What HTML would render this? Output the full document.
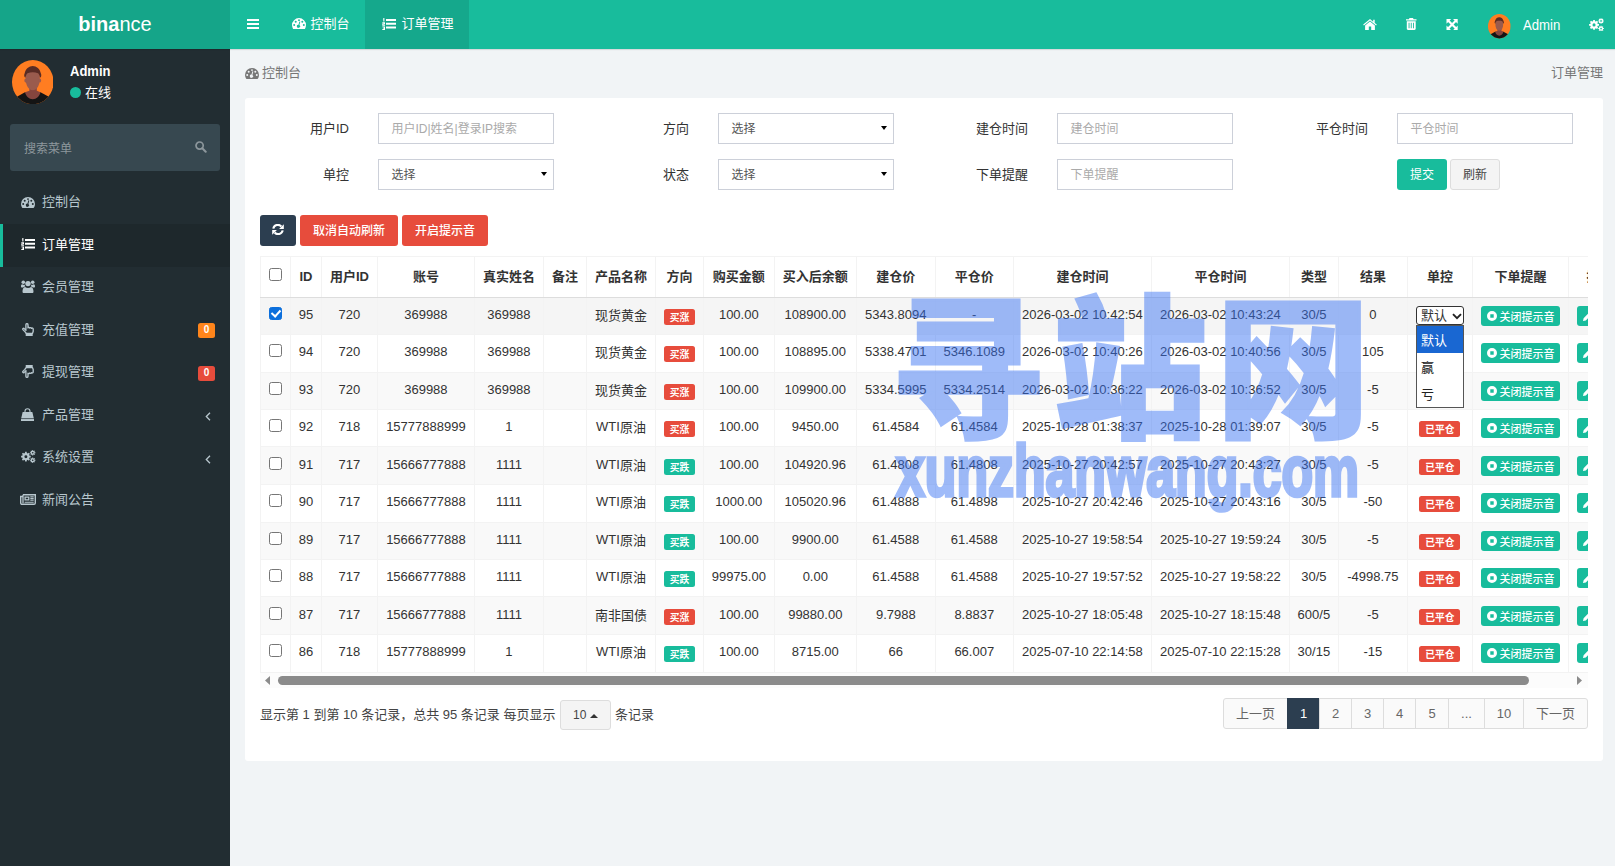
<!DOCTYPE html>
<html lang="zh-CN">
<head>
<meta charset="utf-8">
<title>binance</title>
<style>
*{box-sizing:border-box;margin:0;padding:0}
html,body{width:1615px;height:866px;overflow:hidden}
body{font-family:"Liberation Sans","Noto Sans CJK SC",sans-serif;font-size:13px;color:#444;background:#f1f4f6;position:relative}
svg{display:block}
i{font-style:normal}
/* header */
#hdr{position:absolute;left:0;top:0;width:1615px;height:49px;background:#18bc9c;box-shadow:0 1px 1px rgba(0,0,0,.10);z-index:5}
#logo{position:absolute;left:0;top:0;width:230px;height:49px;background:#15a589;color:#fff;font-size:20px;line-height:49.500px;text-align:center}
#logo b{font-weight:700}
.tab{position:absolute;top:0;height:49px;color:#fff;font-size:13px;line-height:48px;white-space:nowrap}
.tab svg,.hi svg{position:absolute}
.tab span{position:absolute;top:0}
.tab.act{background:rgba(0,0,0,.1)}
.hi{position:absolute;top:0;height:48px}
#hname{position:absolute;left:1522.500px;top:0;line-height:51.2px;font-size:13.800px;color:#fff;transform-origin:0 50%;transform:scaleX(.955)}
/* sidebar */
#side{position:absolute;left:0;top:48px;width:230px;height:818px;background:#222d32}
#uname{position:absolute;left:70px;top:15px;color:#fff;font-weight:700;font-size:14px;line-height:16px;transform-origin:0 50%;transform:scaleX(.93)}
#ustat{position:absolute;left:70px;top:36px;color:#fff;font-size:13px;line-height:18px}
#ustat i{position:absolute;left:-.2px;top:2.600px;width:11.600px;height:11.600px;border-radius:50%;background:#18bc9c}
#ustat span{margin-left:15px}
#srch{position:absolute;left:10px;top:76px;width:210px;height:47px;background:#374850;border-radius:3px;color:#8d979c;font-size:12px;line-height:50px;padding-left:14px}
#srch svg{position:absolute;left:185px;top:17px}
.mi{position:absolute;left:0;width:230px;height:42.57px;color:#b8c7ce;font-size:13px;line-height:40.600px;padding-left:42px}
.mi svg{position:absolute}
.mi.act{background:#1e282c;color:#fff;border-left:3px solid #18bc9c;padding-left:39px}
.bdg{position:absolute;left:198px;top:14px;height:15px;width:17px;border-radius:2.5px;color:#fff;font-size:10px;font-weight:700;line-height:14.500px;text-align:center}
/* content */
#bc{position:absolute;left:262px;top:64px;font-size:13px;line-height:18px;color:#777}
#bc svg{position:absolute;left:-17px;top:3.500px}
#bcr{position:absolute;right:12px;top:64px;font-size:13px;line-height:18px;color:#777}
#panel{position:absolute;left:245px;top:98px;width:1358px;height:663px;background:#fff;border-radius:3px}
.lbl{position:absolute;margin-left:1px;font-size:13px;line-height:32px;color:#333;text-align:right;width:120px}
.inp{position:absolute;width:176px;height:31px;border:1px solid #ccd0d9;background:#fff;font-size:12px;line-height:30px;padding-left:12.500px;color:#aaa}
.inp.sel{color:#555}
.inp.sel:after{content:"";position:absolute;right:6.500px;top:12px;border:3.500px solid transparent;border-top:4.500px solid #000;border-bottom:0}
.btn{position:absolute;height:31px;border-radius:3px;font-size:12px;line-height:32px;text-align:center;color:#fff;white-space:nowrap}
.btn svg{position:absolute}
/* table */
#clip{position:absolute;left:260px;top:256px;width:1328px;height:417px;overflow:hidden}
#tw{position:absolute;left:0;top:0;width:1400px;height:417px;font-size:13px;color:#333}
.rb{position:absolute;left:0;width:1400px;height:37.5px}
.rb.odd{background:#f9f9f9}
.rb.sel{background:#f5f5f5}
.hl{position:absolute;left:0;width:1400px;height:1px;background:#f3f3f3}
.hl2{position:absolute;left:0;width:1400px;height:1px;background:#ddd;z-index:1}
.vl{position:absolute;top:0;width:1px;height:417px;background:#f3f3f3}
.th{position:absolute;top:1px;height:39px;line-height:40px;font-weight:700;text-align:center;white-space:nowrap;color:#333}
.tr{position:absolute;left:0;width:1400px;height:37.5px}
.td{position:absolute;top:0;height:37.5px;line-height:35.400px;text-align:center;white-space:nowrap}
.cb{position:absolute;width:13px;height:13px;border:1px solid #767676;border-radius:2.5px;background:#fff}
.cb.on{background:#0c6fdc;border-color:#0c6fdc}
.cb.on:after{content:"";position:absolute;left:3px;top:0.5px;width:4px;height:7px;border:solid #fff;border-width:0 2px 2px 0;transform:rotate(42deg)}
.cj{position:relative;top:1px}
.lb{display:inline-block;vertical-align:middle;height:16px;line-height:17px;width:31px;border-radius:2.5px;color:#fff;font-size:9.75px;font-weight:700;text-align:center;margin-top:3px}
.lb.r{background:#e74c3c}
.lb.g{background:#18bc9c}
.lb.w{width:41px}
.xb{position:absolute;top:9px;height:20px;border-radius:3px;background:#18bc9c;color:#fff;font-size:11px;font-weight:500;line-height:23px;white-space:nowrap}
.xb svg{position:absolute;left:6px;top:5px}
.xb span{position:absolute;left:18.500px;top:0}
.selbox{position:absolute;top:9px;width:48px;height:19px;border:1px solid #333;border-radius:3px;background:#fff;font-size:13px;line-height:17px;padding-left:4px;color:#333}
.selbox svg{position:absolute;left:35px;top:5.5px}
#dd{position:absolute;left:1416px;top:325px;width:48px;height:83px;border:1px solid #555;background:#fff;z-index:3;font-size:13px;color:#222}
#dd div{height:27px;line-height:29px;padding-left:4px}
#dd div.hl1{background:#1967d2;color:#fff}
/* scrollbar */
#sb{position:absolute;left:260px;top:673px;width:1328px;height:15px;background:#fcfcfc}
#sb .thumb{position:absolute;left:18px;top:3px;width:1251px;height:9px;border-radius:4.5px;background:#8b8b8b}
#sb svg{position:absolute;top:3px}
/* pagination */
#pinfo{position:absolute;left:260px;top:706px;font-size:13px;line-height:18px;color:#444;white-space:nowrap}
#psz{position:absolute;left:560px;top:700px;width:50.500px;height:30px;border:1px solid #ddd;border-radius:3px;background:#f4f4f4;font-size:12px;line-height:28px;color:#444;padding-left:12px}
#psz:after{content:"";position:absolute;left:29px;top:12.500px;border:4px solid transparent;border-bottom:4px solid #333;border-top:0}
#pinfo2{position:absolute;left:615px;top:706px;font-size:13px;line-height:18px;color:#444}
.pg{position:absolute;top:698px;height:31px;border:1px solid #ddd;background:#fafafa;color:#666;font-size:13px;line-height:29px;text-align:center}
.pg.on{background:#2c3e50;border-color:#2c3e50;color:#fff}
/* watermark */
#wm{position:absolute;left:0;top:0;width:1615px;height:866px;opacity:.47;z-index:4;pointer-events:none}
#wm1{position:absolute;left:890px;top:244px;font-family:"Noto Sans CJK SC",sans-serif;font-weight:900;font-size:154px;line-height:230px;letter-spacing:9px;color:#3570f4;white-space:nowrap;-webkit-text-stroke:3px #3570f4}
#wm2{position:absolute;left:896px;top:420.500px;font-family:"Liberation Sans",sans-serif;font-weight:700;font-size:72px;line-height:100px;color:#3570f4;white-space:nowrap;transform-origin:0 0;transform:scaleX(.719);-webkit-text-stroke:3.700px #3570f4}
</style>
</head>
<body>
<div id="hdr">
  <div id="logo"><b>bina</b>nce</div>
  <div class="hi" style="left:230px;width:46px"><svg style="left:17px;top:18.5px" width="12" height="10" viewBox="0 0 12 10"><path d="M0 0h12v2H0zM0 4h12v2H0zM0 8h12v2H0z" fill="#fff"/></svg></div>
  <div class="tab" style="left:276px;width:88.5px"><svg style="left:15.5px;top:17.600px" width="14" height="11.200" viewBox="0 0 14 11"><path fill="#fff" fill-rule="evenodd" d="M7 0a7 7 0 0 1 7 7c0 1.3-.4 2.6-1 3.6-.1.3-.3.4-.6.4H1.600c-.3 0-.5-.1-.6-.4A7 7 0 0 1 0 7a7 7 0 0 1 7-7zM2.200 6a1 1 0 1 0 0 2 1 1 0 0 0 0-2zM3.700 2.700a1 1 0 1 0 0 2 1 1 0 0 0 0-2zM7 1.200a.9.900 0 1 0 0 1.800.9.900 0 0 0 0-1.800zM10.300 2.700a1 1 0 1 0 0 2 1 1 0 0 0 0-2zM11.800 6a1 1 0 1 0 0 2 1 1 0 0 0 0-2zM8.300 3.600l-.9-.3-.9 3.300a1.600 1.600 0 1 0 .9.300z"/></svg><span style="left:34.500px">控制台</span></div>
  <div class="tab act" style="left:364.5px;width:104px"><svg style="left:17.5px;top:17.500px" width="14" height="12" viewBox="0 0 14 12"><path fill="#fff" d="M4 1h10v1.900H4zM4 4.800h10v1.900H4zM4 8.600h10v1.900H4zM1.300 0h1.100v3.400H1.300zM.4 .9l1-.9v1.200zM.3 4.300h2.700v2H1.400v.4h1.600v1H.3V5.500h1.600v-.3H.3zM.3 8.400h2.700v3.600H.3v-.9h1.600v-.5H.9v-.8h1v-.5H.3z"/></svg><span style="left:37px">订单管理</span></div>
  <div class="hi" style="left:1340px;width:275px">
    <svg style="left:22.500px;top:18.500px" width="14" height="11" viewBox="0 0 14 11"><path fill="#fff" d="M7 0 .200 5.600.9 6.400 7 1.400l6.100 5 .7-.8-2.100-1.700V.8h-1.500v1.900zM7 2.400l-4.900 4V11h3.700V7.600h2.400V11h3.700V6.400z"/></svg>
    <svg style="left:66px;top:18.300px" width="10.500" height="12" viewBox="0 0 10.500 12"><path fill="#fff" fill-rule="evenodd" d="M3.500 0h3.500l.6 1.300h2.900v1.200H0V1.300h2.900zM.8 3.200h8.900V10.800c0 .7-.5 1.200-1.200 1.200H2c-.7 0-1.200-.5-1.200-1.200zM2.600 4.700v5.500h.9V4.700zM4.800 4.700v5.500h.9V4.700zM7 4.700v5.500h.9V4.700z"/></svg>
    <svg style="left:105.800px;top:18.800px" width="12.200" height="11.200" viewBox="0 0 12 12"><path fill="#fff" d="M0 0h5L0 5zM12 0v5L7 0zM0 12V7l5 5zM12 12H7l5-5z"/><path d="M2 2l8 8M10 2l-8 8" stroke="#fff" stroke-width="2.300"/></svg>
    <svg style="left:249px;top:17.800px" width="15" height="13.500" viewBox="0 0 15.200 13.500"><path fill="#fff" fill-rule="evenodd" d="M8.88 5.92L10.13 6.06L10.13 7.74L8.88 7.88L8.46 8.88L9.25 9.87L8.07 11.05L7.08 10.26L6.08 10.68L5.94 11.93L4.26 11.93L4.12 10.68L3.12 10.26L2.13 11.05L0.95 9.87L1.74 8.88L1.32 7.88L0.07 7.74L0.07 6.06L1.32 5.92L1.74 4.92L0.95 3.93L2.13 2.75L3.12 3.54L4.12 3.12L4.26 1.87L5.94 1.87L6.08 3.12L7.08 3.54L8.07 2.75L9.25 3.93L8.46 4.92zM3.55 6.90a1.55 1.55 0 1 0 3.10 0a1.55 1.55 0 1 0 -3.10 0zM14.18 2.35L15.05 2.39L15.05 3.41L14.18 3.45L13.98 3.91L14.58 4.56L13.86 5.28L13.21 4.68L12.75 4.88L12.71 5.75L11.69 5.75L11.65 4.88L11.19 4.68L10.54 5.28L9.82 4.56L10.42 3.91L10.22 3.45L9.35 3.41L9.35 2.39L10.22 2.35L10.42 1.89L9.82 1.24L10.54 0.52L11.19 1.12L11.65 0.92L11.69 0.05L12.71 0.05L12.75 0.92L13.21 1.12L13.86 0.52L14.58 1.24L13.98 1.89zM11.35 2.90a0.85 0.85 0 1 0 1.70 0a0.85 0.85 0 1 0 -1.70 0zM14.18 10.05L15.05 10.09L15.05 11.11L14.18 11.15L13.98 11.61L14.58 12.26L13.86 12.98L13.21 12.38L12.75 12.58L12.71 13.45L11.69 13.45L11.65 12.58L11.19 12.38L10.54 12.98L9.82 12.26L10.42 11.61L10.22 11.15L9.35 11.11L9.35 10.09L10.22 10.05L10.42 9.59L9.82 8.94L10.54 8.22L11.19 8.82L11.65 8.62L11.69 7.75L12.71 7.75L12.75 8.62L13.21 8.82L13.86 8.22L14.58 8.94L13.98 9.59zM11.35 10.60a0.85 0.85 0 1 0 1.70 0a0.85 0.85 0 1 0 -1.70 0z"/></svg>
    <svg style="left:148.100px;top:14.400px" width="22.600" height="24.400" viewBox="0 0 41.600 44.200" preserveAspectRatio="none"><defs><clipPath id="av1"><ellipse cx="20.800" cy="22.100" rx="20.800" ry="22.100"/></clipPath></defs><g clip-path="url(#av1)"><rect width="42" height="45" fill="#ff7d21"/><path d="M-2 40.500 13 32.200h15.500L44 40.500V46H-2z" fill="#141414"/><path d="M13 32.200l4.400-1.500V26h7.400v4.700l3.700 1.500c-1 4-4 7-7.750 7S14 36.200 13 32.200z" fill="#85453e"/><path d="M13.700 17c0-4 3-6.500 7.050-6.500S27.800 13 27.800 17v3c0 4-2.200 8-4.300 9.500-1.700 1-3.800 1-5.500 0-2.100-1.500-4.300-5.500-4.300-9.500z" fill="#9a5b4d"/><path d="M13.500 17.800c-1.500-.5-1.600-3-.8-4.500C13.500 9 17 6 20.750 6s7.250 3 8.050 7.300c.8 1.500.7 4-.8 4.500-.2-2-.9-3.600-2-4.600-3.200-1.200-7.300-1.200-10.500 0-1.100 1-1.800 2.600-2 4.600z" fill="#5a2c24"/></g></svg>
  </div>
  <div id="hname">Admin</div>
</div>
<div id="side">
  <svg style="position:absolute;left:11.700px;top:11.700px" width="41.600" height="44.200" viewBox="0 0 41.600 44.200"><defs><clipPath id="av2"><ellipse cx="20.800" cy="22.100" rx="20.800" ry="22.100"/></clipPath></defs><g clip-path="url(#av2)"><rect width="42" height="45" fill="#ff7d21"/><path d="M-2 40.500 13 32.200h15.500L44 40.500V46H-2z" fill="#141414"/><path d="M13 32.200l4.400-1.500V26h7.400v4.700l3.700 1.500c-1 4-4 7-7.750 7S14 36.200 13 32.200z" fill="#85453e"/><path d="M13.700 17c0-4 3-6.500 7.050-6.500S27.800 13 27.800 17v3c0 4-2.200 8-4.300 9.500-1.700 1-3.800 1-5.500 0-2.100-1.500-4.300-5.500-4.300-9.500z" fill="#9a5b4d"/><ellipse cx="13.600" cy="20.500" rx="1.200" ry="2" fill="#9a5b4d"/><ellipse cx="27.900" cy="20.500" rx="1.200" ry="2" fill="#9a5b4d"/><path d="M13.500 17.800c-1.500-.5-1.600-3-.8-4.500C13.500 9 17 6 20.750 6s7.250 3 8.050 7.300c.8 1.500.7 4-.8 4.500-.2-2-.9-3.600-2-4.600-3.200-1.200-7.300-1.200-10.500 0-1.100 1-1.800 2.600-2 4.600z" fill="#5a2c24"/></g></svg>
  <div id="uname">Admin</div>
  <div id="ustat"><i></i><span>在线</span></div>
  <div id="srch">搜索菜单<svg width="11.500" height="11.500" viewBox="0 0 11.500 11.500"><circle cx="4.600" cy="4.600" r="3.600" fill="none" stroke="#8d979c" stroke-width="1.700"/><path d="M7.300 7.300l3.400 3.400" stroke="#8d979c" stroke-width="2" stroke-linecap="round"/></svg></div>
  <div class="mi" style="top:133.43px;line-height:42.600px"><svg style="left:21px;top:15.500px" width="14" height="11" viewBox="0 0 14 11"><path fill="#b8c7ce" fill-rule="evenodd" d="M7 0a7 7 0 0 1 7 7c0 1.300-.4 2.600-1 3.600-.1.300-.3.400-.6.400H1.600c-.3 0-.5-.1-.6-.4A7 7 0 0 1 0 7a7 7 0 0 1 7-7zM2.200 6a1 1 0 1 0 0 2 1 1 0 0 0 0-2zM3.700 2.700a1 1 0 1 0 0 2 1 1 0 0 0 0-2zM7 1.200a.9.900 0 1 0 0 1.800.9.900 0 0 0 0-1.800zM10.300 2.700a1 1 0 1 0 0 2 1 1 0 0 0 0-2zM11.800 6a1 1 0 1 0 0 2 1 1 0 0 0 0-2zM8.300 3.600l-.9-.3-.9 3.300a1.600 1.600 0 1 0 .9.300z"/></svg>控制台</div>
  <div class="mi act" style="top:176.00px;line-height:42.600px"><svg style="left:18px;top:14px" width="14" height="12" viewBox="0 0 14 12"><path fill="#fff" d="M4 1h10v1.900H4zM4 4.800h10v1.900H4zM4 8.600h10v1.900H4zM1.300 0h1.100v3.400H1.300zM.4 .9l1-.9v1.200zM.3 4.300h2.700v2H1.400v.4h1.600v1H.3V5.500h1.600v-.3H.3zM.3 8.400h2.700v3.600H.3v-.9h1.600v-.5H.9v-.8h1v-.5H.3z"/></svg>订单管理</div>
  <div class="mi" style="top:218.57px"><svg style="left:21px;top:13.600px" width="14" height="13" viewBox="0 0 14 13"><g fill="#b8c7ce"><circle cx="7" cy="3.600" r="2.700"/><path d="M2.900 13c-.9 0-1.400-.5-1.400-1.300 0-2.500.8-4.700 2.600-4.700.8.700 1.800 1.100 2.900 1.100s2.100-.4 2.900-1.100c1.800 0 2.600 2.200 2.600 4.700 0 .8-.5 1.300-1.400 1.300z"/><circle cx="2.300" cy="2.300" r="1.800"/><circle cx="11.700" cy="2.300" r="1.800"/><path d="M0 6.500c0-1.400.4-2.300 1.300-2.300.5.400 1.100.6 1.700.6.300 0 .5 0 .8-.1 0 .6.200 1.200.5 1.700-.9.100-1.600.5-2.100 1.100H1C.4 7.500 0 7.200 0 6.500zM14 6.500c0-1.400-.4-2.300-1.300-2.300-.5.400-1.100.6-1.700.6-.3 0-.5 0-.8-.1 0 .6-.2 1.200-.5 1.700.9.100 1.600.5 2.100 1.100H13c.6 0 1-.3 1-1z"/></g></svg>会员管理</div>
  <div class="mi" style="top:261.14px;line-height:42.600px"><svg style="left:21px;top:13.700px;margin-left:1.200px" width="12" height="13" viewBox="0 0 12 13"><path d="M3.9 7.4V1.7c0-1.4 2.1-1.4 2.100 0v3.200c.2-.8 1.700-.7 1.800.2.2-.7 1.600-.6 1.700.3.3-.6 1.700-.4 1.700.6v2.300c0 .9-.7 1.400-.7 2.100H4.100c0-.7-.8-1.200-1.500-2L.9 6.600C.2 5.800 1.400 4.800 2.200 5.600z" fill="none" stroke="#b8c7ce" stroke-width="1.350" stroke-linejoin="round"/><path d="M3.700 10.400h7v2.600h-7z" fill="#b8c7ce"/></svg>充值管理<i class="bdg" style="background:#ff851b">0</i></div>
  <div class="mi" style="top:303.71px"><svg style="left:21px;top:13.200px;margin-left:1.200px" width="12" height="13" viewBox="0 0 12 13"><g transform="translate(0,13) scale(1,-1)"><path d="M3.9 7.4V1.7c0-1.4 2.1-1.4 2.100 0v3.200c.2-.8 1.700-.7 1.800.2.2-.7 1.600-.6 1.700.3.3-.6 1.700-.4 1.700.6v2.300c0 .9-.7 1.400-.7 2.100H4.100c0-.7-.8-1.200-1.500-2L.9 6.600C.2 5.800 1.400 4.800 2.200 5.600z" fill="none" stroke="#b8c7ce" stroke-width="1.350" stroke-linejoin="round"/><path d="M3.700 10.400h7v2.600h-7z" fill="#b8c7ce"/></g></svg>提现管理<i class="bdg" style="background:#e74c3c">0</i></div>
  <div class="mi" style="top:346.28px;line-height:42.600px"><svg style="left:21px;top:14px" width="13" height="13" viewBox="0 0 13 13"><path d="M4 5V3.200a2.500 2.500 0 0 1 5 0V5" fill="none" stroke="#b8c7ce" stroke-width="1.100"/><path d="M1.700 4h9.600L13 11v2H0v-2z" fill="#b8c7ce"/><path d="M0 10.600h13" stroke="#222d32" stroke-width=".7"/></svg>产品管理<svg style="left:205px;top:18px" width="6" height="9" viewBox="0 0 6 9"><path d="M5 .7 1.300 4.500 5 8.300" fill="none" stroke="#b8c7ce" stroke-width="1.300"/></svg></div>
  <div class="mi" style="top:388.85px"><svg style="left:21px;top:13.500px" width="14.600" height="13" viewBox="0 0 15.200 13.500"><path fill="#b8c7ce" fill-rule="evenodd" d="M8.88 5.92L10.13 6.06L10.13 7.74L8.88 7.88L8.46 8.88L9.25 9.87L8.07 11.05L7.08 10.26L6.08 10.68L5.94 11.93L4.26 11.93L4.12 10.68L3.12 10.26L2.13 11.05L0.95 9.87L1.74 8.88L1.32 7.88L0.07 7.74L0.07 6.06L1.32 5.92L1.74 4.92L0.95 3.93L2.13 2.75L3.12 3.54L4.12 3.12L4.26 1.87L5.94 1.87L6.08 3.12L7.08 3.54L8.07 2.75L9.25 3.93L8.46 4.92zM3.55 6.90a1.55 1.55 0 1 0 3.10 0a1.55 1.55 0 1 0 -3.10 0zM14.18 2.35L15.05 2.39L15.05 3.41L14.18 3.45L13.98 3.91L14.58 4.56L13.86 5.28L13.21 4.68L12.75 4.88L12.71 5.75L11.69 5.75L11.65 4.88L11.19 4.68L10.54 5.28L9.82 4.56L10.42 3.91L10.22 3.45L9.35 3.41L9.35 2.39L10.22 2.35L10.42 1.89L9.82 1.24L10.54 0.52L11.19 1.12L11.65 0.92L11.69 0.05L12.71 0.05L12.75 0.92L13.21 1.12L13.86 0.52L14.58 1.24L13.98 1.89zM11.35 2.90a0.85 0.85 0 1 0 1.70 0a0.85 0.85 0 1 0 -1.70 0zM14.18 10.05L15.05 10.09L15.05 11.11L14.18 11.15L13.98 11.61L14.58 12.26L13.86 12.98L13.21 12.38L12.75 12.58L12.71 13.45L11.69 13.45L11.65 12.58L11.19 12.38L10.54 12.98L9.82 12.26L10.42 11.61L10.22 11.15L9.35 11.11L9.35 10.09L10.22 10.05L10.42 9.59L9.82 8.94L10.54 8.22L11.19 8.82L11.65 8.62L11.69 7.75L12.71 7.75L12.75 8.62L13.21 8.82L13.86 8.22L14.58 8.94L13.98 9.59zM11.35 10.60a0.85 0.85 0 1 0 1.70 0a0.85 0.85 0 1 0 -1.70 0z"/></svg>系统设置<svg style="left:205px;top:18px" width="6" height="9" viewBox="0 0 6 9"><path d="M5 .7 1.300 4.500 5 8.300" fill="none" stroke="#b8c7ce" stroke-width="1.300"/></svg></div>
  <div class="mi" style="top:431.42px;line-height:42.600px"><svg style="left:21px;top:14.800px;margin-left:-1px" width="16" height="11" viewBox="0 0 16 11"><g fill="none" stroke="#b8c7ce"><path d="M3 .7h12.300v8.300c0 .7-.6 1.300-1.300 1.300H2C1.300 10.300.7 9.700.7 9V2.500H3" stroke-width="1.400"/><path d="M3 .7v8.500" stroke-width="1.300"/><path d="M5.100 3.100h3.700v2.800H5.100z" stroke-width="1.300"/><path d="M10.300 2.900h3.400M10.300 4.600h3.400M10.300 6.300h3.400M4.600 8.200h9.100" stroke-width="1.100"/></g></svg>新闻公告</div>
</div>
<div id="bc"><svg width="14" height="11" viewBox="0 0 14 11"><path fill="#777" fill-rule="evenodd" d="M7 0a7 7 0 0 1 7 7c0 1.300-.4 2.600-1 3.600-.1.300-.3.400-.6.400H1.600c-.3 0-.5-.1-.6-.4A7 7 0 0 1 0 7a7 7 0 0 1 7-7zM2.200 6a1 1 0 1 0 0 2 1 1 0 0 0 0-2zM3.700 2.700a1 1 0 1 0 0 2 1 1 0 0 0 0-2zM7 1.200a.9.900 0 1 0 0 1.800.9.900 0 0 0 0-1.800zM10.300 2.700a1 1 0 1 0 0 2 1 1 0 0 0 0-2zM11.800 6a1 1 0 1 0 0 2 1 1 0 0 0 0-2zM8.300 3.600l-.9-.3-.9 3.300a1.600 1.600 0 1 0 .9.300z"/></svg>控制台</div>
<div id="bcr">订单管理</div>
<div id="panel"></div>
<!-- search form -->
<div class="lbl" style="left:228px;top:113px">用户ID</div>
<div class="inp" style="left:378px;top:113px">用户ID|姓名|登录IP搜索</div>
<div class="lbl" style="left:568px;top:113px">方向</div>
<div class="inp sel" style="left:718px;top:113px">选择</div>
<div class="lbl" style="left:907px;top:113px">建仓时间</div>
<div class="inp" style="left:1057px;top:113px">建仓时间</div>
<div class="lbl" style="left:1247px;top:113px">平仓时间</div>
<div class="inp" style="left:1397px;top:113px">平仓时间</div>
<div class="lbl" style="left:228px;top:159px">单控</div>
<div class="inp sel" style="left:378px;top:159px">选择</div>
<div class="lbl" style="left:568px;top:159px">状态</div>
<div class="inp sel" style="left:718px;top:159px">选择</div>
<div class="lbl" style="left:907px;top:159px">下单提醒</div>
<div class="inp" style="left:1057px;top:159px">下单提醒</div>
<div class="btn" style="left:1397px;top:159px;width:50px;background:#18bc9c">提交</div>
<div class="btn" style="left:1450px;top:159px;width:50px;background:#f4f4f4;border:1px solid #ddd;color:#444;line-height:30px">刷新</div>
<!-- toolbar -->
<div class="btn" style="left:260px;top:215px;width:36px;background:#2c3e50"><svg style="left:12.200px;top:9.300px" width="12" height="11" viewBox="0 0 12 11"><g id="rf"><path d="M1.300 4.600A4.600 4.600 0 0 1 9.300 2.500" fill="none" stroke="#fff" stroke-width="2.100"/><path d="M11.800 .2v4.700H7.100z" fill="#fff"/></g><g transform="rotate(180 6 5.500)"><path d="M1.300 4.600A4.600 4.600 0 0 1 9.300 2.500" fill="none" stroke="#fff" stroke-width="2.100"/><path d="M11.800 .2v4.700H7.100z" fill="#fff"/></g></svg></div>
<div class="btn" style="left:300px;top:215px;width:98px;background:#e74c3c;font-weight:500">取消自动刷新</div>
<div class="btn" style="left:402px;top:215px;width:86px;background:#e74c3c;font-weight:500">开启提示音</div>
<div id="clip">
<div id="tw">
<div class="rb sel" style="top:41px"></div>
<div class="rb" style="top:78.5px"></div>
<div class="rb odd" style="top:116px"></div>
<div class="rb" style="top:153.5px"></div>
<div class="rb odd" style="top:191px"></div>
<div class="rb" style="top:228.5px"></div>
<div class="rb odd" style="top:266px"></div>
<div class="rb" style="top:303.5px"></div>
<div class="rb odd" style="top:341px"></div>
<div class="rb" style="top:378.5px"></div>
<div class="hl" style="top:0"></div>
<div class="hl2" style="top:41px"></div>
<div class="hl" style="top:78px"></div>
<div class="hl" style="top:116px"></div>
<div class="hl" style="top:153px"></div>
<div class="hl" style="top:190px"></div>
<div class="hl" style="top:228px"></div>
<div class="hl" style="top:266px"></div>
<div class="hl" style="top:303px"></div>
<div class="hl" style="top:340px"></div>
<div class="hl" style="top:378px"></div>
<div class="hl" style="top:416px"></div>
<div class="vl" style="left:0px"></div>
<div class="vl" style="left:30px"></div>
<div class="vl" style="left:61px"></div>
<div class="vl" style="left:117px"></div>
<div class="vl" style="left:214px"></div>
<div class="vl" style="left:283px"></div>
<div class="vl" style="left:326px"></div>
<div class="vl" style="left:395px"></div>
<div class="vl" style="left:443px"></div>
<div class="vl" style="left:514px"></div>
<div class="vl" style="left:596px"></div>
<div class="vl" style="left:675px"></div>
<div class="vl" style="left:753px"></div>
<div class="vl" style="left:891px"></div>
<div class="vl" style="left:1029px"></div>
<div class="vl" style="left:1078px"></div>
<div class="vl" style="left:1147px"></div>
<div class="vl" style="left:1212px"></div>
<div class="vl" style="left:1308px"></div>
<div class="th" style="left:0.2px;width:30.4px"><i class="cb" style="left:9px;top:11px"></i></div>
<div class="th" style="left:30.6px;width:30.8px">ID</div>
<div class="th" style="left:61.4px;width:56px">用户ID</div>
<div class="th" style="left:117.4px;width:97px">账号</div>
<div class="th" style="left:214.4px;width:69px">真实姓名</div>
<div class="th" style="left:283.4px;width:43.2px">备注</div>
<div class="th" style="left:326.6px;width:68.8px">产品名称</div>
<div class="th" style="left:395.4px;width:48px">方向</div>
<div class="th" style="left:443.4px;width:70.8px">购买金额</div>
<div class="th" style="left:514.2px;width:82.2px">买入后余额</div>
<div class="th" style="left:596.4px;width:78.8px">建仓价</div>
<div class="th" style="left:675.2px;width:78.2px">平仓价</div>
<div class="th" style="left:753.4px;width:138px">建仓时间</div>
<div class="th" style="left:891.4px;width:138px">平仓时间</div>
<div class="th" style="left:1029.4px;width:49px">类型</div>
<div class="th" style="left:1078.4px;width:69px">结果</div>
<div class="th" style="left:1147.4px;width:65px">单控</div>
<div class="th" style="left:1212.4px;width:96px">下单提醒</div>
<div class="th" style="left:1308.4px;width:71.6px;text-align:left;padding-left:18px">操作</div>
<div class="tr" style="top:41px">
<i class="cb on" style="left:9px;top:9.900px"></i>
<div class="td" style="left:30.6px;width:30.8px">95</div>
<div class="td" style="left:61.4px;width:56px">720</div>
<div class="td" style="left:117.4px;width:97px">369988</div>
<div class="td" style="left:214.4px;width:69px">369988</div>
<div class="td" style="left:326.6px;width:68.8px"><span class="cj">现货黄金</span></div>
<div class="td" style="left:395.4px;width:48px"><span class="lb r">买涨</span></div>
<div class="td" style="left:443.4px;width:70.8px">100.00</div>
<div class="td" style="left:514.2px;width:82.2px">108900.00</div>
<div class="td" style="left:596.4px;width:78.8px">5343.8094</div>
<div class="td" style="left:675.2px;width:78.2px">-</div>
<div class="td" style="left:753.4px;width:138px">2026-03-02 10:42:54</div>
<div class="td" style="left:891.4px;width:138px">2026-03-02 10:43:24</div>
<div class="td" style="left:1029.4px;width:49px">30/5</div>
<div class="td" style="left:1078.4px;width:69px">0</div>
<div class="selbox" style="left:1156px">默认<svg width="10" height="7" viewBox="0 0 10 7"><path d="M1 1.2 L5 5.2 L9 1.2" fill="none" stroke="#222" stroke-width="1.9"/></svg></div>
<div class="xb" style="left:1221px;width:79px"><svg width="10" height="10" viewBox="0 0 10 10"><path fill="#fff" fill-rule="evenodd" d="M5 0a5 5 0 1 0 0 10A5 5 0 0 0 5 0zM3.300 3.300h3.400v3.400H3.300z"/></svg><span>关闭提示音</span></div>
<div class="xb" style="left:1317px;width:24px"><svg width="10" height="10" viewBox="0 0 10 10"><path d="M0 10 L0.6 7.2 L6.6 1.2 L8.8 3.4 L2.8 9.4 Z M7.4 .5 L8 0 L10 2 L9.5 2.6 Z" fill="#fff"/></svg></div>
</div>
<div class="tr" style="top:78.35px">
<i class="cb" style="left:9px;top:9.900px"></i>
<div class="td" style="left:30.6px;width:30.8px">94</div>
<div class="td" style="left:61.4px;width:56px">720</div>
<div class="td" style="left:117.4px;width:97px">369988</div>
<div class="td" style="left:214.4px;width:69px">369988</div>
<div class="td" style="left:326.6px;width:68.8px"><span class="cj">现货黄金</span></div>
<div class="td" style="left:395.4px;width:48px"><span class="lb r">买涨</span></div>
<div class="td" style="left:443.4px;width:70.8px">100.00</div>
<div class="td" style="left:514.2px;width:82.2px">108895.00</div>
<div class="td" style="left:596.4px;width:78.8px">5338.4701</div>
<div class="td" style="left:675.2px;width:78.2px">5346.1089</div>
<div class="td" style="left:753.4px;width:138px">2026-03-02 10:40:26</div>
<div class="td" style="left:891.4px;width:138px">2026-03-02 10:40:56</div>
<div class="td" style="left:1029.4px;width:49px">30/5</div>
<div class="td" style="left:1078.4px;width:69px">105</div>
<div class="td" style="left:1147.4px;width:65px"><span class="lb r w">已平仓</span></div>
<div class="xb" style="left:1221px;width:79px"><svg width="10" height="10" viewBox="0 0 10 10"><path fill="#fff" fill-rule="evenodd" d="M5 0a5 5 0 1 0 0 10A5 5 0 0 0 5 0zM3.300 3.300h3.400v3.400H3.300z"/></svg><span>关闭提示音</span></div>
<div class="xb" style="left:1317px;width:24px"><svg width="10" height="10" viewBox="0 0 10 10"><path d="M0 10 L0.6 7.2 L6.6 1.2 L8.8 3.4 L2.8 9.4 Z M7.4 .5 L8 0 L10 2 L9.5 2.6 Z" fill="#fff"/></svg></div>
</div>
<div class="tr" style="top:116px">
<i class="cb" style="left:9px;top:9.900px"></i>
<div class="td" style="left:30.6px;width:30.8px">93</div>
<div class="td" style="left:61.4px;width:56px">720</div>
<div class="td" style="left:117.4px;width:97px">369988</div>
<div class="td" style="left:214.4px;width:69px">369988</div>
<div class="td" style="left:326.6px;width:68.8px"><span class="cj">现货黄金</span></div>
<div class="td" style="left:395.4px;width:48px"><span class="lb r">买涨</span></div>
<div class="td" style="left:443.4px;width:70.8px">100.00</div>
<div class="td" style="left:514.2px;width:82.2px">109900.00</div>
<div class="td" style="left:596.4px;width:78.8px">5334.5995</div>
<div class="td" style="left:675.2px;width:78.2px">5334.2514</div>
<div class="td" style="left:753.4px;width:138px">2026-03-02 10:36:22</div>
<div class="td" style="left:891.4px;width:138px">2026-03-02 10:36:52</div>
<div class="td" style="left:1029.4px;width:49px">30/5</div>
<div class="td" style="left:1078.4px;width:69px">-5</div>
<div class="td" style="left:1147.4px;width:65px"><span class="lb r w">已平仓</span></div>
<div class="xb" style="left:1221px;width:79px"><svg width="10" height="10" viewBox="0 0 10 10"><path fill="#fff" fill-rule="evenodd" d="M5 0a5 5 0 1 0 0 10A5 5 0 0 0 5 0zM3.300 3.300h3.400v3.400H3.300z"/></svg><span>关闭提示音</span></div>
<div class="xb" style="left:1317px;width:24px"><svg width="10" height="10" viewBox="0 0 10 10"><path d="M0 10 L0.6 7.2 L6.6 1.2 L8.8 3.4 L2.8 9.4 Z M7.4 .5 L8 0 L10 2 L9.5 2.6 Z" fill="#fff"/></svg></div>
</div>
<div class="tr" style="top:153.35px">
<i class="cb" style="left:9px;top:9.900px"></i>
<div class="td" style="left:30.6px;width:30.8px">92</div>
<div class="td" style="left:61.4px;width:56px">718</div>
<div class="td" style="left:117.4px;width:97px">15777888999</div>
<div class="td" style="left:214.4px;width:69px">1</div>
<div class="td" style="left:326.6px;width:68.8px">WTI<span class="cj">原油</span></div>
<div class="td" style="left:395.4px;width:48px"><span class="lb r">买涨</span></div>
<div class="td" style="left:443.4px;width:70.8px">100.00</div>
<div class="td" style="left:514.2px;width:82.2px">9450.00</div>
<div class="td" style="left:596.4px;width:78.8px">61.4584</div>
<div class="td" style="left:675.2px;width:78.2px">61.4584</div>
<div class="td" style="left:753.4px;width:138px">2025-10-28 01:38:37</div>
<div class="td" style="left:891.4px;width:138px">2025-10-28 01:39:07</div>
<div class="td" style="left:1029.4px;width:49px">30/5</div>
<div class="td" style="left:1078.4px;width:69px">-5</div>
<div class="td" style="left:1147.4px;width:65px"><span class="lb r w">已平仓</span></div>
<div class="xb" style="left:1221px;width:79px"><svg width="10" height="10" viewBox="0 0 10 10"><path fill="#fff" fill-rule="evenodd" d="M5 0a5 5 0 1 0 0 10A5 5 0 0 0 5 0zM3.300 3.300h3.400v3.400H3.300z"/></svg><span>关闭提示音</span></div>
<div class="xb" style="left:1317px;width:24px"><svg width="10" height="10" viewBox="0 0 10 10"><path d="M0 10 L0.6 7.2 L6.6 1.2 L8.8 3.4 L2.8 9.4 Z M7.4 .5 L8 0 L10 2 L9.5 2.6 Z" fill="#fff"/></svg></div>
</div>
<div class="tr" style="top:191px">
<i class="cb" style="left:9px;top:9.900px"></i>
<div class="td" style="left:30.6px;width:30.8px">91</div>
<div class="td" style="left:61.4px;width:56px">717</div>
<div class="td" style="left:117.4px;width:97px">15666777888</div>
<div class="td" style="left:214.4px;width:69px">1111</div>
<div class="td" style="left:326.6px;width:68.8px">WTI<span class="cj">原油</span></div>
<div class="td" style="left:395.4px;width:48px"><span class="lb g">买跌</span></div>
<div class="td" style="left:443.4px;width:70.8px">100.00</div>
<div class="td" style="left:514.2px;width:82.2px">104920.96</div>
<div class="td" style="left:596.4px;width:78.8px">61.4808</div>
<div class="td" style="left:675.2px;width:78.2px">61.4808</div>
<div class="td" style="left:753.4px;width:138px">2025-10-27 20:42:57</div>
<div class="td" style="left:891.4px;width:138px">2025-10-27 20:43:27</div>
<div class="td" style="left:1029.4px;width:49px">30/5</div>
<div class="td" style="left:1078.4px;width:69px">-5</div>
<div class="td" style="left:1147.4px;width:65px"><span class="lb r w">已平仓</span></div>
<div class="xb" style="left:1221px;width:79px"><svg width="10" height="10" viewBox="0 0 10 10"><path fill="#fff" fill-rule="evenodd" d="M5 0a5 5 0 1 0 0 10A5 5 0 0 0 5 0zM3.300 3.300h3.400v3.400H3.300z"/></svg><span>关闭提示音</span></div>
<div class="xb" style="left:1317px;width:24px"><svg width="10" height="10" viewBox="0 0 10 10"><path d="M0 10 L0.6 7.2 L6.6 1.2 L8.8 3.4 L2.8 9.4 Z M7.4 .5 L8 0 L10 2 L9.5 2.6 Z" fill="#fff"/></svg></div>
</div>
<div class="tr" style="top:228.35px">
<i class="cb" style="left:9px;top:9.900px"></i>
<div class="td" style="left:30.6px;width:30.8px">90</div>
<div class="td" style="left:61.4px;width:56px">717</div>
<div class="td" style="left:117.4px;width:97px">15666777888</div>
<div class="td" style="left:214.4px;width:69px">1111</div>
<div class="td" style="left:326.6px;width:68.8px">WTI<span class="cj">原油</span></div>
<div class="td" style="left:395.4px;width:48px"><span class="lb g">买跌</span></div>
<div class="td" style="left:443.4px;width:70.8px">1000.00</div>
<div class="td" style="left:514.2px;width:82.2px">105020.96</div>
<div class="td" style="left:596.4px;width:78.8px">61.4888</div>
<div class="td" style="left:675.2px;width:78.2px">61.4898</div>
<div class="td" style="left:753.4px;width:138px">2025-10-27 20:42:46</div>
<div class="td" style="left:891.4px;width:138px">2025-10-27 20:43:16</div>
<div class="td" style="left:1029.4px;width:49px">30/5</div>
<div class="td" style="left:1078.4px;width:69px">-50</div>
<div class="td" style="left:1147.4px;width:65px"><span class="lb r w">已平仓</span></div>
<div class="xb" style="left:1221px;width:79px"><svg width="10" height="10" viewBox="0 0 10 10"><path fill="#fff" fill-rule="evenodd" d="M5 0a5 5 0 1 0 0 10A5 5 0 0 0 5 0zM3.300 3.300h3.400v3.400H3.300z"/></svg><span>关闭提示音</span></div>
<div class="xb" style="left:1317px;width:24px"><svg width="10" height="10" viewBox="0 0 10 10"><path d="M0 10 L0.6 7.2 L6.6 1.2 L8.8 3.4 L2.8 9.4 Z M7.4 .5 L8 0 L10 2 L9.5 2.6 Z" fill="#fff"/></svg></div>
</div>
<div class="tr" style="top:266px">
<i class="cb" style="left:9px;top:9.900px"></i>
<div class="td" style="left:30.6px;width:30.8px">89</div>
<div class="td" style="left:61.4px;width:56px">717</div>
<div class="td" style="left:117.4px;width:97px">15666777888</div>
<div class="td" style="left:214.4px;width:69px">1111</div>
<div class="td" style="left:326.6px;width:68.8px">WTI<span class="cj">原油</span></div>
<div class="td" style="left:395.4px;width:48px"><span class="lb g">买跌</span></div>
<div class="td" style="left:443.4px;width:70.8px">100.00</div>
<div class="td" style="left:514.2px;width:82.2px">9900.00</div>
<div class="td" style="left:596.4px;width:78.8px">61.4588</div>
<div class="td" style="left:675.2px;width:78.2px">61.4588</div>
<div class="td" style="left:753.4px;width:138px">2025-10-27 19:58:54</div>
<div class="td" style="left:891.4px;width:138px">2025-10-27 19:59:24</div>
<div class="td" style="left:1029.4px;width:49px">30/5</div>
<div class="td" style="left:1078.4px;width:69px">-5</div>
<div class="td" style="left:1147.4px;width:65px"><span class="lb r w">已平仓</span></div>
<div class="xb" style="left:1221px;width:79px"><svg width="10" height="10" viewBox="0 0 10 10"><path fill="#fff" fill-rule="evenodd" d="M5 0a5 5 0 1 0 0 10A5 5 0 0 0 5 0zM3.300 3.300h3.400v3.400H3.300z"/></svg><span>关闭提示音</span></div>
<div class="xb" style="left:1317px;width:24px"><svg width="10" height="10" viewBox="0 0 10 10"><path d="M0 10 L0.6 7.2 L6.6 1.2 L8.8 3.4 L2.8 9.4 Z M7.4 .5 L8 0 L10 2 L9.5 2.6 Z" fill="#fff"/></svg></div>
</div>
<div class="tr" style="top:303.35px">
<i class="cb" style="left:9px;top:9.900px"></i>
<div class="td" style="left:30.6px;width:30.8px">88</div>
<div class="td" style="left:61.4px;width:56px">717</div>
<div class="td" style="left:117.4px;width:97px">15666777888</div>
<div class="td" style="left:214.4px;width:69px">1111</div>
<div class="td" style="left:326.6px;width:68.8px">WTI<span class="cj">原油</span></div>
<div class="td" style="left:395.4px;width:48px"><span class="lb g">买跌</span></div>
<div class="td" style="left:443.4px;width:70.8px">99975.00</div>
<div class="td" style="left:514.2px;width:82.2px">0.00</div>
<div class="td" style="left:596.4px;width:78.8px">61.4588</div>
<div class="td" style="left:675.2px;width:78.2px">61.4588</div>
<div class="td" style="left:753.4px;width:138px">2025-10-27 19:57:52</div>
<div class="td" style="left:891.4px;width:138px">2025-10-27 19:58:22</div>
<div class="td" style="left:1029.4px;width:49px">30/5</div>
<div class="td" style="left:1078.4px;width:69px">-4998.75</div>
<div class="td" style="left:1147.4px;width:65px"><span class="lb r w">已平仓</span></div>
<div class="xb" style="left:1221px;width:79px"><svg width="10" height="10" viewBox="0 0 10 10"><path fill="#fff" fill-rule="evenodd" d="M5 0a5 5 0 1 0 0 10A5 5 0 0 0 5 0zM3.300 3.300h3.400v3.400H3.300z"/></svg><span>关闭提示音</span></div>
<div class="xb" style="left:1317px;width:24px"><svg width="10" height="10" viewBox="0 0 10 10"><path d="M0 10 L0.6 7.2 L6.6 1.2 L8.8 3.4 L2.8 9.4 Z M7.4 .5 L8 0 L10 2 L9.5 2.6 Z" fill="#fff"/></svg></div>
</div>
<div class="tr" style="top:341px">
<i class="cb" style="left:9px;top:9.900px"></i>
<div class="td" style="left:30.6px;width:30.8px">87</div>
<div class="td" style="left:61.4px;width:56px">717</div>
<div class="td" style="left:117.4px;width:97px">15666777888</div>
<div class="td" style="left:214.4px;width:69px">1111</div>
<div class="td" style="left:326.6px;width:68.8px"><span class="cj">南非国债</span></div>
<div class="td" style="left:395.4px;width:48px"><span class="lb r">买涨</span></div>
<div class="td" style="left:443.4px;width:70.8px">100.00</div>
<div class="td" style="left:514.2px;width:82.2px">99880.00</div>
<div class="td" style="left:596.4px;width:78.8px">9.7988</div>
<div class="td" style="left:675.2px;width:78.2px">8.8837</div>
<div class="td" style="left:753.4px;width:138px">2025-10-27 18:05:48</div>
<div class="td" style="left:891.4px;width:138px">2025-10-27 18:15:48</div>
<div class="td" style="left:1029.4px;width:49px">600/5</div>
<div class="td" style="left:1078.4px;width:69px">-5</div>
<div class="td" style="left:1147.4px;width:65px"><span class="lb r w">已平仓</span></div>
<div class="xb" style="left:1221px;width:79px"><svg width="10" height="10" viewBox="0 0 10 10"><path fill="#fff" fill-rule="evenodd" d="M5 0a5 5 0 1 0 0 10A5 5 0 0 0 5 0zM3.300 3.300h3.400v3.400H3.300z"/></svg><span>关闭提示音</span></div>
<div class="xb" style="left:1317px;width:24px"><svg width="10" height="10" viewBox="0 0 10 10"><path d="M0 10 L0.6 7.2 L6.6 1.2 L8.8 3.4 L2.8 9.4 Z M7.4 .5 L8 0 L10 2 L9.5 2.6 Z" fill="#fff"/></svg></div>
</div>
<div class="tr" style="top:378.35px">
<i class="cb" style="left:9px;top:9.900px"></i>
<div class="td" style="left:30.6px;width:30.8px">86</div>
<div class="td" style="left:61.4px;width:56px">718</div>
<div class="td" style="left:117.4px;width:97px">15777888999</div>
<div class="td" style="left:214.4px;width:69px">1</div>
<div class="td" style="left:326.6px;width:68.8px">WTI<span class="cj">原油</span></div>
<div class="td" style="left:395.4px;width:48px"><span class="lb g">买跌</span></div>
<div class="td" style="left:443.4px;width:70.8px">100.00</div>
<div class="td" style="left:514.2px;width:82.2px">8715.00</div>
<div class="td" style="left:596.4px;width:78.8px">66</div>
<div class="td" style="left:675.2px;width:78.2px">66.007</div>
<div class="td" style="left:753.4px;width:138px">2025-07-10 22:14:58</div>
<div class="td" style="left:891.4px;width:138px">2025-07-10 22:15:28</div>
<div class="td" style="left:1029.4px;width:49px">30/15</div>
<div class="td" style="left:1078.4px;width:69px">-15</div>
<div class="td" style="left:1147.4px;width:65px"><span class="lb r w">已平仓</span></div>
<div class="xb" style="left:1221px;width:79px"><svg width="10" height="10" viewBox="0 0 10 10"><path fill="#fff" fill-rule="evenodd" d="M5 0a5 5 0 1 0 0 10A5 5 0 0 0 5 0zM3.300 3.300h3.400v3.400H3.300z"/></svg><span>关闭提示音</span></div>
<div class="xb" style="left:1317px;width:24px"><svg width="10" height="10" viewBox="0 0 10 10"><path d="M0 10 L0.6 7.2 L6.6 1.2 L8.8 3.4 L2.8 9.4 Z M7.4 .5 L8 0 L10 2 L9.5 2.6 Z" fill="#fff"/></svg></div>
</div>
</div>
</div>
<div id="dd"><div class="hl1">默认</div><div>赢</div><div>亏</div></div>
<div id="sb"><svg style="left:5px" width="5" height="9" viewBox="0 0 5 9"><path d="M5 0v9L0 4.500z" fill="#8b8b8b"/></svg><div class="thumb"></div><svg style="left:1317px" width="5" height="9" viewBox="0 0 5 9"><path d="M0 0v9l5-4.500z" fill="#8b8b8b"/></svg></div>
<div id="pinfo">显示第 1 到第 10 条记录，总共 95 条记录 每页显示</div>
<div id="psz">10</div>
<div id="pinfo2">条记录</div>
<div class="pg" style="left:1223px;width:65px;border-radius:3px 0 0 3px">上一页</div>
<div class="pg on" style="left:1287px;width:33px">1</div>
<div class="pg" style="left:1319px;width:33px">2</div>
<div class="pg" style="left:1351px;width:33px">3</div>
<div class="pg" style="left:1383px;width:33px">4</div>
<div class="pg" style="left:1415px;width:34px">5</div>
<div class="pg" style="left:1448px;width:37px">...</div>
<div class="pg" style="left:1484px;width:40px">10</div>
<div class="pg" style="left:1523px;width:65px;border-radius:0 3px 3px 0">下一页</div>
<div id="wm"><div id="wm1">寻站网</div><div id="wm2">xunzhanwang.com</div></div>
</body>
</html>
